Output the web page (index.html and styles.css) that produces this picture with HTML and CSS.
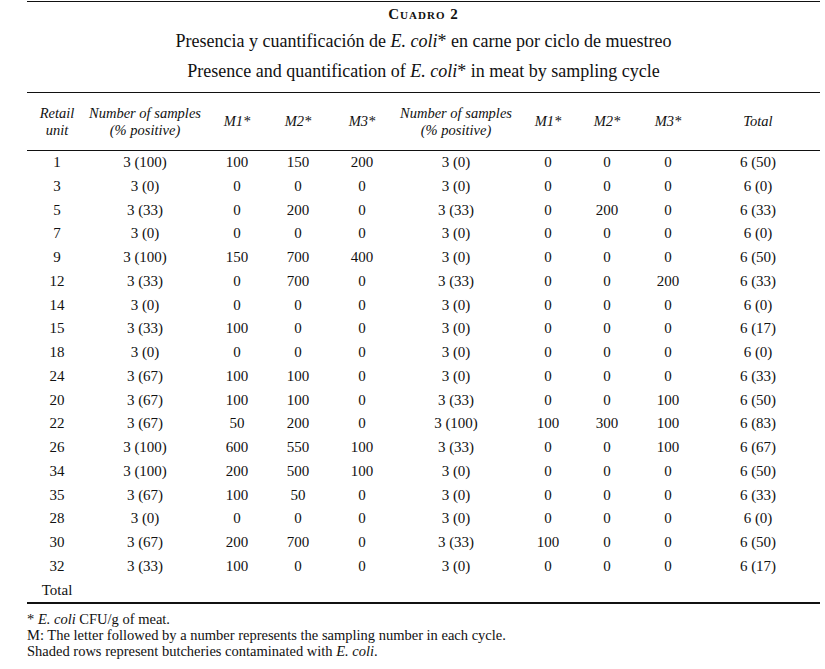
FILE: index.html
```html
<!DOCTYPE html>
<html>
<head>
<meta charset="utf-8">
<link rel="stylesheet" href="styles.css">
</head>
<body>
<div class="page">
  <div class="caption">
    <div class="label">Cuadro 2</div>
    <div class="title">Presencia y cuantificación de <i>E. coli</i>* en carne por ciclo de muestreo</div>
    <div class="title">Presence and quantification of <i>E. coli</i>* in meat by sampling cycle</div>
  </div>
  <table class="data">
    <colgroup>
      <col class="c1"><col class="c2"><col class="c3"><col class="c4"><col class="c5">
      <col class="c6"><col class="c7"><col class="c8"><col class="c9"><col class="c10">
    </colgroup>
    <thead>
      <tr>
        <th>Retail<br>unit</th>
        <th>Number of samples<br>(% positive)</th>
        <th>M1*</th><th>M2*</th><th>M3*</th>
        <th>Number of samples<br>(% positive)</th>
        <th>M1*</th><th>M2*</th><th>M3*</th>
        <th class="last">Total</th>
      </tr>
    </thead>
    <tbody>
      <tr><td>1</td><td>3 (100)</td><td>100</td><td>150</td><td>200</td><td>3 (0)</td><td>0</td><td>0</td><td>0</td><td class="last">6 (50)</td></tr>
      <tr><td>3</td><td>3 (0)</td><td>0</td><td>0</td><td>0</td><td>3 (0)</td><td>0</td><td>0</td><td>0</td><td class="last">6 (0)</td></tr>
      <tr><td>5</td><td>3 (33)</td><td>0</td><td>200</td><td>0</td><td>3 (33)</td><td>0</td><td>200</td><td>0</td><td class="last">6 (33)</td></tr>
      <tr><td>7</td><td>3 (0)</td><td>0</td><td>0</td><td>0</td><td>3 (0)</td><td>0</td><td>0</td><td>0</td><td class="last">6 (0)</td></tr>
      <tr><td>9</td><td>3 (100)</td><td>150</td><td>700</td><td>400</td><td>3 (0)</td><td>0</td><td>0</td><td>0</td><td class="last">6 (50)</td></tr>
      <tr><td>12</td><td>3 (33)</td><td>0</td><td>700</td><td>0</td><td>3 (33)</td><td>0</td><td>0</td><td>200</td><td class="last">6 (33)</td></tr>
      <tr><td>14</td><td>3 (0)</td><td>0</td><td>0</td><td>0</td><td>3 (0)</td><td>0</td><td>0</td><td>0</td><td class="last">6 (0)</td></tr>
      <tr><td>15</td><td>3 (33)</td><td>100</td><td>0</td><td>0</td><td>3 (0)</td><td>0</td><td>0</td><td>0</td><td class="last">6 (17)</td></tr>
      <tr><td>18</td><td>3 (0)</td><td>0</td><td>0</td><td>0</td><td>3 (0)</td><td>0</td><td>0</td><td>0</td><td class="last">6 (0)</td></tr>
      <tr><td>24</td><td>3 (67)</td><td>100</td><td>100</td><td>0</td><td>3 (0)</td><td>0</td><td>0</td><td>0</td><td class="last">6 (33)</td></tr>
      <tr><td>20</td><td>3 (67)</td><td>100</td><td>100</td><td>0</td><td>3 (33)</td><td>0</td><td>0</td><td>100</td><td class="last">6 (50)</td></tr>
      <tr><td>22</td><td>3 (67)</td><td>50</td><td>200</td><td>0</td><td>3 (100)</td><td>100</td><td>300</td><td>100</td><td class="last">6 (83)</td></tr>
      <tr><td>26</td><td>3 (100)</td><td>600</td><td>550</td><td>100</td><td>3 (33)</td><td>0</td><td>0</td><td>100</td><td class="last">6 (67)</td></tr>
      <tr><td>34</td><td>3 (100)</td><td>200</td><td>500</td><td>100</td><td>3 (0)</td><td>0</td><td>0</td><td>0</td><td class="last">6 (50)</td></tr>
      <tr><td>35</td><td>3 (67)</td><td>100</td><td>50</td><td>0</td><td>3 (0)</td><td>0</td><td>0</td><td>0</td><td class="last">6 (33)</td></tr>
      <tr><td>28</td><td>3 (0)</td><td>0</td><td>0</td><td>0</td><td>3 (0)</td><td>0</td><td>0</td><td>0</td><td class="last">6 (0)</td></tr>
      <tr><td>30</td><td>3 (67)</td><td>200</td><td>700</td><td>0</td><td>3 (33)</td><td>100</td><td>0</td><td>0</td><td class="last">6 (50)</td></tr>
      <tr><td>32</td><td>3 (33)</td><td>100</td><td>0</td><td>0</td><td>3 (0)</td><td>0</td><td>0</td><td>0</td><td class="last">6 (17)</td></tr>
      <tr class="total"><td>Total</td><td></td><td></td><td></td><td></td><td></td><td></td><td></td><td></td><td class="last"></td></tr>
    </tbody>
  </table>
  <div class="notes">
    <div>* <i>E. coli</i> CFU/g of meat.</div>
    <div>M: The letter followed by a number represents the sampling number in each cycle.</div>
    <div>Shaded rows represent butcheries contaminated with <i>E. coli</i>.</div>
  </div>
</div>
</body>
</html>
```

FILE: styles.css
```css
html, body {
  margin: 0;
  padding: 0;
  background: #fff;
}
body {
  font-family: "Liberation Serif", "Times New Roman", serif;
  color: #111;
}
.page {
  width: 793px;
  margin: 1px 0 0 27px;
}
.caption {
  border-top: 1px solid #111;
  padding: 2px 0 8px;
  text-align: center;
}
.label {
  font-variant: small-caps;
  font-weight: bold;
  font-size: 15px;
  line-height: 20px;
  letter-spacing: 1px;
}
.title {
  font-size: 18px;
  line-height: 26px;
  margin-top: 4px;
}
.data {
  width: 793px;
  border-collapse: collapse;
  table-layout: fixed;
  border-top: 1px solid #111;
  border-bottom: 2px solid #111;
}
.c1 { width: 60px; }
.c2 { width: 116px; }
.c3 { width: 68px; }
.c4 { width: 54px; }
.c5 { width: 74px; }
.c6 { width: 114px; }
.c7 { width: 70px; }
.c8 { width: 48px; }
.c9 { width: 74px; }
.c10 { width: 115px; }
.data th {
  font-style: italic;
  font-weight: normal;
  font-size: 14.5px;
  line-height: 17px;
  height: 57px;
  padding: 0;
  text-align: center;
  vertical-align: middle;
  border-bottom: 1px solid #111;
}
.data td {
  font-size: 15px;
  line-height: 23.75px;
  height: 23.75px;
  padding: 0;
  text-align: center;
  white-space: nowrap;
}
.data .last {
  padding-right: 9px;
}
.notes {
  margin-top: 7px;
  font-size: 14.5px;
  line-height: 16px;
}
```
